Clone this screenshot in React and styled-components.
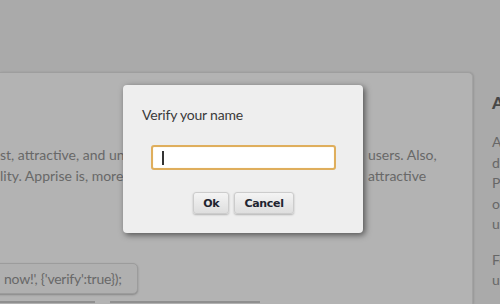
import React from "react";
import styled, { createGlobalStyle } from "styled-components";

const GlobalStyle = createGlobalStyle`
  html, body {
    margin: 0;
    padding: 0;
    width: 500px;
    height: 304px;
    overflow: hidden;
    background: #aaaaaa;
  }
  * {
    box-sizing: border-box;
  }
`;

const Page = styled.div`
  position: relative;
  width: 500px;
  height: 304px;
  overflow: hidden;
  padding-top: 72px;
  font-family: "Lato", "Open Sans", sans-serif;
  background: #aaaaaa;
`;

const Content = styled.div`
  display: flex;
  height: 232px;
`;

const Main = styled.div`
  width: 473px;
  flex-shrink: 0;
  background: #b3b3b3;
  border-top: 1px solid #9e9e9e;
  border-right: 1px solid #a3a3a3;
  border-top-right-radius: 5px;
  box-shadow: 1px 0 2px rgba(0, 0, 0, 0.12);
  padding-top: 71px;
  display: flex;
  flex-direction: column;
  overflow: hidden;
`;

const Line = styled.div`
  display: grid;
  grid-template-columns: 368px 1fr;
  height: 21px;
  line-height: 21px;
  font-size: 14px;
  color: #686868;
  white-space: nowrap;

  span {
    overflow: hidden;
  }
`;

const CodeBox = styled.div`
  margin-top: 77px;
  margin-left: -8px;
  width: 146px;
  height: 31px;
  flex-shrink: 0;
  background: #b0b0b0;
  border: 1px solid #9c9c9c;
  border-radius: 5px;
  box-shadow: 0 1px 2px rgba(0, 0, 0, 0.25);
  padding-left: 11px;
  line-height: 29px;
  font-size: 14px;
  letter-spacing: -0.25px;
  color: #686868;
  white-space: nowrap;
  overflow: hidden;
`;

const NextRow = styled.div`
  display: flex;
  gap: 15px;
  margin-top: 7px;
  flex-shrink: 0;
`;

const Tab = styled.div`
  width: ${(p) => p.$w}px;
  height: 10px;
  border-top: 2px solid #8f8f8f;
  background: #b1b1b1;
`;

const Sidebar = styled.div`
  flex: 1;
  padding: 20px 0 0 19px;
  overflow: hidden;
  white-space: nowrap;
  color: #676767;
  font-size: 14px;
`;

const SideTitle = styled.div`
  font-size: 17px;
  font-weight: 900;
  color: #474747;
  line-height: 22px;
  margin-bottom: 18px;
`;

const SidePara = styled.div`
  line-height: 20.5px;
  margin-bottom: 15px;
`;

const Dialog = styled.div`
  position: absolute;
  left: 123px;
  top: 85px;
  width: 240px;
  height: 148px;
  background: #eeeeee;
  border-radius: 4px;
  box-shadow: 2px 2px 6px rgba(0, 0, 0, 0.55);
  padding: 21px 19px 0 19px;
  display: flex;
  flex-direction: column;
`;

const Title = styled.div`
  font-size: 14px;
  line-height: 18px;
  color: #3a3a3a;
  letter-spacing: -0.2px;
`;

const Field = styled.div`
  align-self: center;
  margin-top: 21px;
  width: 185px;
  height: 25px;
  background: #ffffff;
  border: 2px solid #dfae5c;
  border-radius: 3px;
  box-shadow: inset 0 0 1px rgba(240, 200, 120, 0.8);
  display: flex;
  align-items: center;
  padding-left: 9px;
`;

const Caret = styled.span`
  display: block;
  width: 2px;
  height: 14px;
  background: #333333;
`;

const Buttons = styled.div`
  display: flex;
  justify-content: center;
  gap: 5px;
  margin-top: 22px;
  padding-left: 1px;
`;

const Button = styled.button`
  height: 22px;
  padding: 0 9px;
  font-family: "DejaVu Sans", Verdana, sans-serif;
  font-size: 11px;
  font-weight: bold;
  letter-spacing: -0.3px;
  color: #1f2430;
  background: linear-gradient(#f4f4f4, #dedede);
  border: 1px solid #cccccc;
  border-radius: 3px;
  box-shadow: 0 1px 2px rgba(0, 0, 0, 0.25);
`;

export default function App() {
  return (
    <>
      <GlobalStyle />
      <Page>
        <Content>
          <Main>
            <Line>
              <span>st, attractive, and unobtrusive way to alert your</span>
              <span>users. Also,</span>
            </Line>
            <Line>
              <span>lity. Apprise is, more than anything, a simple and</span>
              <span>attractive</span>
            </Line>
            <CodeBox>now!', {"{'verify':true}"});</CodeBox>
            <NextRow>
              <Tab $w={95} />
              <Tab $w={150} />
            </NextRow>
          </Main>
          <Sidebar>
            <SideTitle>About</SideTitle>
            <SidePara>
              <div>Apprise was</div>
              <div>developed to</div>
              <div>Provide a</div>
              <div>one-liner for</div>
              <div>users.</div>
            </SidePara>
            <SidePara>
              <div>Feel free to</div>
              <div>use it.</div>
            </SidePara>
          </Sidebar>
        </Content>
        <Dialog>
          <Title>Verify your name</Title>
          <Field role="textbox">
            <Caret />
          </Field>
          <Buttons>
            <Button>Ok</Button>
            <Button>Cancel</Button>
          </Buttons>
        </Dialog>
      </Page>
    </>
  );
}
